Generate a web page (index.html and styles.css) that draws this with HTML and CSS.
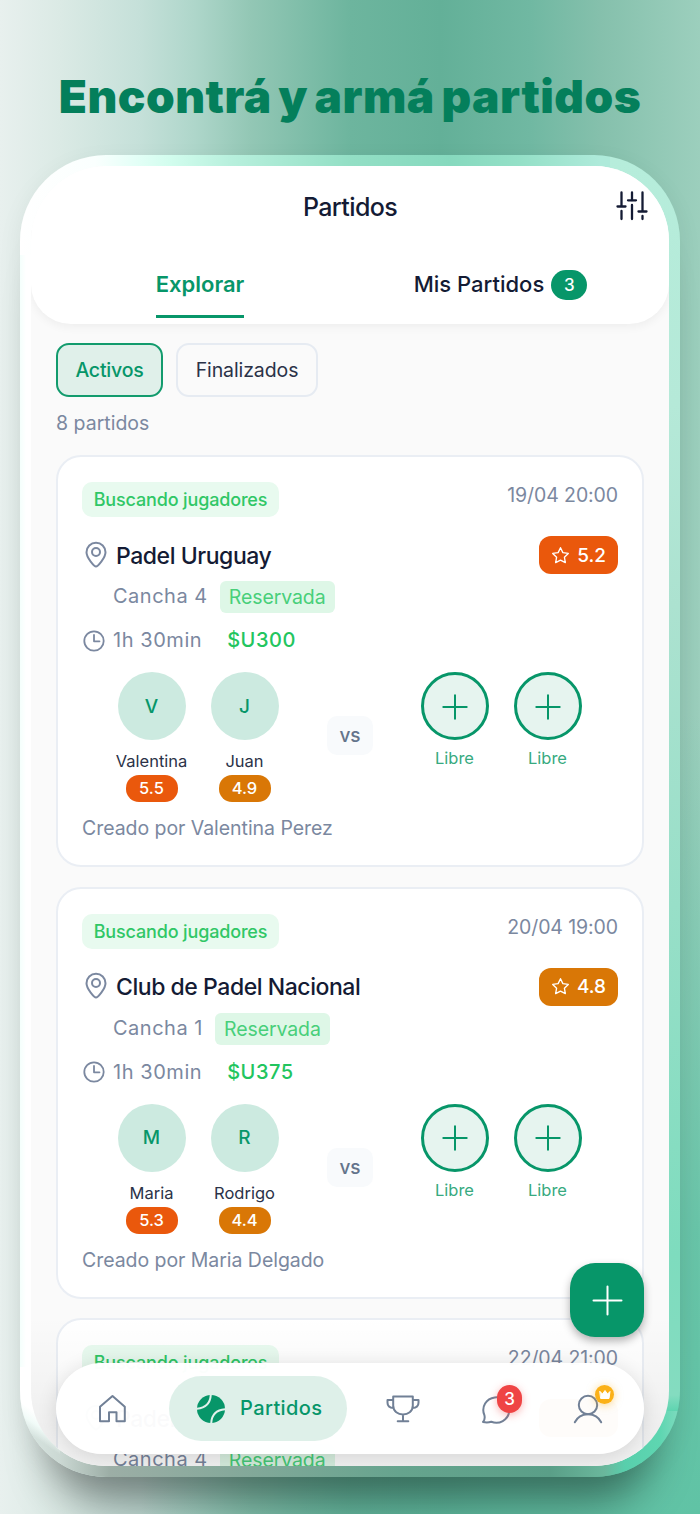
FILE: index.html
```html
<!DOCTYPE html>
<html lang="es">
<head>
<meta charset="utf-8">
<title>Partidos</title>
<link rel="stylesheet" href="styles.css">
</head>
<body>
<svg width="0" height="0" class="defs">
  <symbol id="pin" viewBox="0 0 24 28"><path d="M12 25.5C10.5 25.500 2.500 17 2.500 11.200a9.500 9.500 0 0 1 19 0C21.500 17 13.500 25.500 12 25.500Z"/><circle cx="12" cy="11" r="4"/></symbol>
  <symbol id="clock" viewBox="0 0 24 24"><circle cx="12" cy="12" r="9.700"/><path d="M12 6v6.300h5.500"/></symbol>
  <symbol id="star" viewBox="0 0 20 20"><path d="M10 1.800l2.500 5.200 5.700.8-4.100 4 1 5.700-5.100-2.700-5.100 2.700 1-5.700-4.100-4 5.700-.8z"/></symbol>
  <symbol id="plus" viewBox="0 0 26 26"><path d="M13 1.300v23.400M1.300 13h23.400"/></symbol>
</svg>
<h1 class="headline"><span>Encontrá y armá partidos</span></h1>
<div class="phone">
  <div class="screen">
    <header class="header">
      <div class="titlebar">
        <span class="title">Partidos</span>
        <svg class="filters" width="32" height="30" viewBox="0 0 32 30"><path d="M5.500 1.500v14M1.500 15.500h8M5.500 20v8M16 1.500v8M12 9.300h8M16 14v14M26.500 1.500v19M22.500 20.500h8M26.500 25v3"/></svg>
      </div>
      <nav class="tabs">
        <div class="tab on"><span>Explorar</span></div>
        <div class="tab"><span>Mis Partidos</span><b>3</b></div>
      </nav>
    </header>
    <main class="content">
      <div class="chips"><span class="chip on">Activos</span><span class="chip">Finalizados</span></div>
      <p class="count">8 partidos</p>
      <article class="card">
        <div class="top"><span class="status">Buscando jugadores</span><time>19/04 20:00</time></div>
        <div class="place"><svg class="pin"><use href="#pin"/></svg><h2>Padel Uruguay</h2><span class="level hot"><svg><use href="#star"/></svg>5.2</span></div>
        <div class="court"><span>Cancha 4</span><em>Reservada</em></div>
        <div class="meta"><svg><use href="#clock"/></svg><span>1h 30min</span><strong>$U300</strong></div>
        <div class="teams">
          <div class="team"><div class="player"><i>V</i><span>Valentina</span><b class="hot">5.5</b></div><div class="player"><i>J</i><span>Juan</span><b class="warm">4.9</b></div></div>
          <span class="vs">vs</span>
          <div class="team"><div class="player free"><i><svg><use href="#plus"/></svg></i><span>Libre</span></div><div class="player free"><i><svg><use href="#plus"/></svg></i><span>Libre</span></div></div>
        </div>
        <p class="author">Creado por Valentina Perez</p>
      </article>
      <article class="card">
        <div class="top"><span class="status">Buscando jugadores</span><time>20/04 19:00</time></div>
        <div class="place"><svg class="pin"><use href="#pin"/></svg><h2>Club de Padel Nacional</h2><span class="level warm"><svg><use href="#star"/></svg>4.8</span></div>
        <div class="court"><span>Cancha 1</span><em>Reservada</em></div>
        <div class="meta"><svg><use href="#clock"/></svg><span>1h 30min</span><strong>$U375</strong></div>
        <div class="teams">
          <div class="team"><div class="player"><i>M</i><span>Maria</span><b class="hot">5.3</b></div><div class="player"><i>R</i><span>Rodrigo</span><b class="warm">4.4</b></div></div>
          <span class="vs">vs</span>
          <div class="team"><div class="player free"><i><svg><use href="#plus"/></svg></i><span>Libre</span></div><div class="player free"><i><svg><use href="#plus"/></svg></i><span>Libre</span></div></div>
        </div>
        <p class="author">Creado por Maria Delgado</p>
      </article>
      <article class="card">
        <div class="top"><span class="status">Buscando jugadores</span><time>22/04 21:00</time></div>
        <div class="place"><svg class="pin"><use href="#pin"/></svg><h2>Padel Club Norte</h2><span class="level warm blank"></span></div>
        <div class="court"><span>Cancha 4</span><em>Reservada</em></div>
      </article>
    </main>
    <div class="fade"></div>
    <button class="fab" aria-label="Crear partido"><svg width="31" height="31" viewBox="0 0 31 31"><path d="M15.500 1.500v28M1.500 15.500h28"/></svg></button>
    <nav class="dock">
      <svg class="home" width="30" height="30" viewBox="0 0 30 30"><path d="M3 27.300V12.800L15.500 2l12.300 10.800v14.500h-8.300v-9h-7.500v9z"/></svg>
      <span class="current"><svg width="28" height="28" viewBox="0 0 28 28"><circle cx="14" cy="14" r="14"/><path d="M13.800-1Q13.500 13-1 13.700M29 14.300Q14.500 15 14.200 29"/></svg>Partidos</span>
      <svg class="trophy" width="34" height="28" viewBox="0 0 34 28"><path d="M7.200 1.500h19.600v9c0 12-19.600 12-19.600 0zM7.200 5H1.500v2.800q0 5 6 5.200M26.800 5h5.700v2.800q0 5-6 5.200M17 20v6M11.700 26.300h10.600"/></svg>
      <span class="chat"><svg width="30" height="30" viewBox="0 0 30 30"><path d="M3.300 20.800A13 12.700 0 1 1 10.300 27.700Q6.500 29 2 28 4.500 25 3.300 20.800Z"/></svg><b>3</b></span>
      <span class="user"><svg width="30" height="30" viewBox="0 0 30 30"><circle cx="15" cy="11" r="9.200"/><path d="M1.800 28.300C7 17.500 23 17.500 28.200 28.300"/></svg><b><svg width="12" height="10" viewBox="0 0 12 10"><path d="M1 1.500l2.500 2.500L6 .5 8.500 4 11 1.500 10 8.500H2z"/></svg></b></span>
    </nav>
  </div>
</div>
</body>
</html>
```
FILE: styles.css
```css
* { box-sizing: border-box; margin: 0; }
body {
  width: 700px; height: 1514px; overflow: hidden;
  font-family: Inter, sans-serif; color: #141b34; letter-spacing: 0;
  background:
    radial-gradient(ellipse 560px 800px at 100% 100%, #60c3a5 0, rgba(96,195,165,.85) 35%, rgba(96,195,165,0) 100%),
    linear-gradient(90deg, #e8f0ee 0, #dbeae5 60px, #c5e0d9 140px, #aed6ca 195px, #93c7b5 250px, #6db59e 350px, #63b098 440px, #70b8a2 530px, #85c0ac 600px, #9ccfbd 700px);
}
svg { fill: none; stroke: currentColor; stroke-width: 2; stroke-linecap: round; stroke-linejoin: round; flex: none; }
.defs { position: absolute; }
.headline { height: 155px; padding-top: 69px; text-align: center; font-size: 46px; line-height: 54px; font-weight: 900; color: #047f5b; letter-spacing: .480px; word-spacing: -3px; white-space: nowrap; }
.phone {
  width: 660px; height: 1322px; margin-left: 20px; padding: 11px; border-radius: 86px;
  background-image:
    linear-gradient(35deg, transparent 41px, #f1fbf8 52px, #fff 62px),
    linear-gradient(90deg, #dbe8e4 0, #cbd8d3 40px, #9caea6 90px, #86a99b 210px, #66a48e 380px, #5a9f88 530px, #6ab79c 585px, #58cfac 605px, #5ed6b1 640px, #80dbbf 660px),
    linear-gradient(180deg, #b6eddb 0, #b5e9d8 250px, #ace2d0 450px, #98dfc8 750px, #7edcbe 1100px, #84dcc0 1240px, #5ed4b0 1256px),
    linear-gradient(90deg, #fff 0, #fafffe 75px, #e4fff7 115px, #d2fdee 150px, #b8f0dd 210px, #93dfc5 330px, #86d9be 430px, #94e0c7 500px, #aeeada 580px),
    linear-gradient(90deg, #f4fffc, #fff 6px);
  background-repeat: no-repeat;
  background-size: 40px 110px, 100% 66px, 70px calc(100% - 66px), 100% 100px, auto;
  background-position: left bottom, bottom, right top, top, center;
  box-shadow: 0 56px 44px -30px rgba(0,0,0,.4), 0 8px 26px rgba(0,0,0,.06);
}
.screen { position: relative; height: 1300px; overflow: hidden; border-radius: 75px; background: #fafafa; }
.header { height: 158px; padding-top: 17px; border-radius: 0 0 40px 40px; background: #fff; box-shadow: 0 3px 10px rgba(0,0,0,.05); }
.titlebar { display: grid; grid-template-columns: 1fr auto 1fr; align-items: center; height: 47px; padding-right: 21px; padding-left: 21px; }
.title { grid-column: 2; font-size: 25px; font-weight: 500; letter-spacing: -.6px; }
.filters { justify-self: end; margin-top: -1px; stroke-width: 2.300; }
.tabs { display: grid; grid-template-columns: 300px 301px; padding: 29px 18px 0 19px; }
.tab { display: flex; justify-content: center; align-items: center; gap: 7px; height: 59px; padding-bottom: 8px; font-size: 22px; font-weight: 500; }
.tab span { line-height: 51px; }
.tab.on { align-self: start; font-weight: 600; color: #079669; }
.tab.on span { height: 59px; margin-bottom: -8px; border-bottom: 3px solid; }
.tab b { width: 36px; height: 30px; border-radius: 15px; background: #079669; color: #fff; font-size: 17px; font-weight: 500; line-height: 30px; text-align: center; }
.content { padding: 19px 25px 0; }
.chips { display: flex; gap: 13px; }
.chip { height: 54px; width: 142px; text-align: center; border: 2px solid #e6ebf2; border-radius: 13px; font-size: 19.500px; letter-spacing: -.1px; line-height: 51px; color: #2b3248; }
.chip.on { width: 107px; border-color: #129b6d; background: #e0f0ea; color: #079669; font-weight: 500; letter-spacing: -.2px; }
.count { height: 58px; font-size: 19.500px; line-height: 52px; color: #7b88a0; }
.card { height: 412px; margin-bottom: 19.500px; padding: 25px 24px 0; border: 2px solid #eaeef4; border-radius: 25px; background: #fff; }
.top { display: flex; justify-content: space-between; height: 53px; }
.status { height: 35px; width: 197px; text-align: center; white-space: nowrap; border-radius: 10px; background: #e8faef; color: #30c766; font-size: 18px; font-weight: 500; letter-spacing: -.15px; line-height: 36px; }
time { font-size: 19.500px; line-height: 26px; letter-spacing: -.1px; color: #7b88a0; }
.place { display: flex; align-items: center; height: 40px; }
.pin { width: 24px; height: 28px; margin: -1px 8px 0 2px; color: #7b88a0; }
h2 { margin-top: 1px; font-size: 23px; font-weight: 500; letter-spacing: -.45px; }
.level { display: flex; align-items: center; justify-content: center; gap: 7px; width: 79px; height: 38px; margin-left: auto; border-radius: 12px; color: #fff; font-size: 19px; font-weight: 500; }
.level svg { width: 19px; height: 19px; stroke-width: 1.400; }
.hot { background: #ea580c; }
.warm { background: #d97706; }
.court { display: flex; gap: 12px; height: 43px; padding: 6px 0 0 31px; font-size: 20px; line-height: 31px; color: #7b88a0; letter-spacing: .5px; }
.court em { width: 115px; height: 32px; text-align: center; border-radius: 6px; background: #def7e7; color: #48cf7a; font-style: normal; font-size: 19.500px; letter-spacing: -.1px; line-height: 32px; }
.meta { display: flex; align-items: center; height: 44px; font-size: 20px; letter-spacing: .55px; color: #7b88a0; }
.meta svg { width: 24px; height: 24px; margin: 1px 7px 0 0; stroke-width: 1.800; }
.meta strong { margin-left: 25px; color: #22c55e; font-weight: 500; }
.teams { display: flex; height: 143px; padding: 10px 23px 0; }
.team { display: flex; width: 186px; }
.player { display: flex; flex-direction: column; align-items: center; width: 93px; }
.player i { display: grid; place-items: center; width: 68px; height: 68px; border-radius: 50%; background: #cceae0; color: #079669; font-style: normal; font-size: 19px; font-weight: 500; }
.player span { margin-top: 9px; font-size: 16.500px; line-height: 24px; color: #2b3248; }
.player b { width: 52px; height: 27px; margin-top: 2px; border-radius: 13px; color: #fff; font-size: 16.500px; font-weight: 500; line-height: 27px; text-align: center; }
.player.free i { border: 3px solid #079669; background: #e6f4ef; }
.player.free svg { width: 26px; height: 26px; margin-top: 1px; }
.player.free span { margin-top: 6px; color: #38aa80; }
.vs { width: 46px; height: 39px; margin: 44px 35px 0 36px; border-radius: 10px; background: #f8fafc; color: #64748b; font-size: 19px; font-weight: 500; line-height: 40px; text-align: center; }
.author { margin-top: 10px; font-size: 19.500px; line-height: 27px; letter-spacing: -.05px; color: #7b88a0; }
.fade { position: absolute; inset: auto 0 0; height: 150px; background: linear-gradient(transparent, rgba(0,0,0,.06)); }
.fab { position: absolute; right: 25px; bottom: 129px; display: grid; place-items: center; width: 74px; height: 74px; padding: 0; border: 0; border-radius: 25px; background: #079669; color: #fff; box-shadow: 0 4px 8px rgba(0,0,0,.3); }
.dock { position: absolute; left: 25px; bottom: 12.500px; display: flex; align-items: center; width: 588px; height: 91px; padding: 0 0 0 41px; border-radius: 46px; background: rgba(255,255,255,.98); color: #718096; box-shadow: 0 3px 20px rgba(0,0,0,.12); }
.dock > svg, .current svg, .chat, .user { margin-top: 2px; }
.current { display: flex; flex: none; align-items: center; gap: 15px; width: 178px; height: 65px; margin: 0 39px 0 42px; padding-left: 28px; border-radius: 33px; background: rgba(218,238,231,.9); color: #079669; font-size: 20px; font-weight: 500; letter-spacing: .4px; line-height: 67px; }
.current circle { fill: #079669; stroke: none; }
.current path { stroke: #e0f1eb; }
.chat { position: relative; display: flex; margin-left: 61px; }
.user { position: relative; display: flex; margin-left: 62px; }
.chat b { position: absolute; left: 16px; top: -9px; width: 25px; height: 28px; border-radius: 13px; background: #ef4444; color: #fff; font-size: 17px; line-height: 28px; font-weight: 500; text-align: center; box-shadow: 0 2px 8px rgba(239,68,68,.4); }
.user b { position: absolute; left: 22px; top: -9px; display: grid; place-items: center; width: 19px; height: 19px; border-radius: 50%; background: #fbb117; color: #fff; box-shadow: 0 1px 8px rgba(251,177,23,.5); }
.user b svg { fill: #fff; stroke-width: 1; }
```
